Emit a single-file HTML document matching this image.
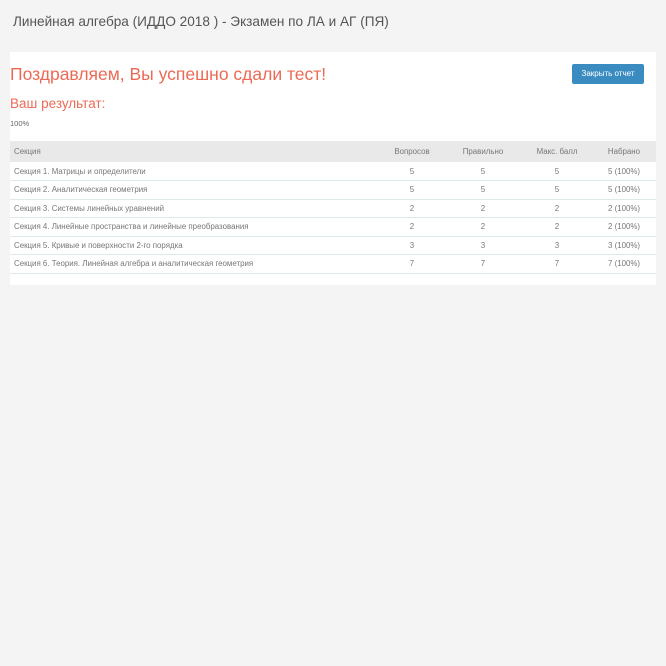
<!DOCTYPE html>
<html><head><meta charset="utf-8"><style>
*{margin:0;padding:0;box-sizing:border-box}
body{width:666px;height:666px;background:#f4f4f4;font-family:"Liberation Sans","DejaVu Sans",sans-serif;position:relative;overflow:hidden}
.t{position:absolute;left:13px;top:14px;font-size:13.6px;color:#555}
.p{position:absolute;left:10px;top:52px;width:646px;height:233px;background:#fff}
.h1{position:absolute;left:0;top:12px;font-size:17.5px;color:#ec6a55}
.h2{position:absolute;left:0;top:44px;font-size:13.5px;color:#ec6a55}
.pc{position:absolute;left:0;top:67px;font-size:7.5px;color:#666}
.btn{position:absolute;left:562px;top:12px;width:72px;height:20px;background:#3a8cc0;border-radius:2px;color:#fff;font-size:8px;text-align:center;line-height:20px}
table{position:absolute;left:0;top:89px;width:646px;border-collapse:collapse;font-size:7.9px;color:#777}
th{background:#e9e9e9;font-weight:normal;height:21px;text-align:center}
th:first-child,td:first-child{text-align:left;padding-left:4px}
td{height:18.5px;border-bottom:1.5px solid #dfeae8;text-align:center}
.c1{width:370px}.c2{width:64px}.c3{width:78px}.c4{width:70px}
</style></head><body>
<div class="t">Линейная алгебра (ИДДО 2018 ) - Экзамен по ЛА и АГ (ПЯ)</div>
<div class="p">
<div class="h1">Поздравляем, Вы успешно сдали тест!</div>
<div class="h2">Ваш результат:</div>
<div class="pc">100%</div>
<div class="btn">Закрыть отчет</div>
<table>
<tr><th class="c1">Секция</th><th class="c2">Вопросов</th><th class="c3">Правильно</th><th class="c4">Макс. балл</th><th>Набрано</th></tr>
<tr><td>Секция 1. Матрицы и определители</td><td>5</td><td>5</td><td>5</td><td>5 (100%)</td></tr>
<tr><td>Секция 2. Аналитическая геометрия</td><td>5</td><td>5</td><td>5</td><td>5 (100%)</td></tr>
<tr><td>Секция 3. Системы линейных уравнений</td><td>2</td><td>2</td><td>2</td><td>2 (100%)</td></tr>
<tr><td>Секция 4. Линейные пространства и линейные преобразования</td><td>2</td><td>2</td><td>2</td><td>2 (100%)</td></tr>
<tr><td>Секция 5. Кривые и поверхности 2-го порядка</td><td>3</td><td>3</td><td>3</td><td>3 (100%)</td></tr>
<tr><td>Секция 6. Теория. Линейная алгебра и аналитическая геометрия</td><td>7</td><td>7</td><td>7</td><td>7 (100%)</td></tr>
</table>
</div>
</body></html>
